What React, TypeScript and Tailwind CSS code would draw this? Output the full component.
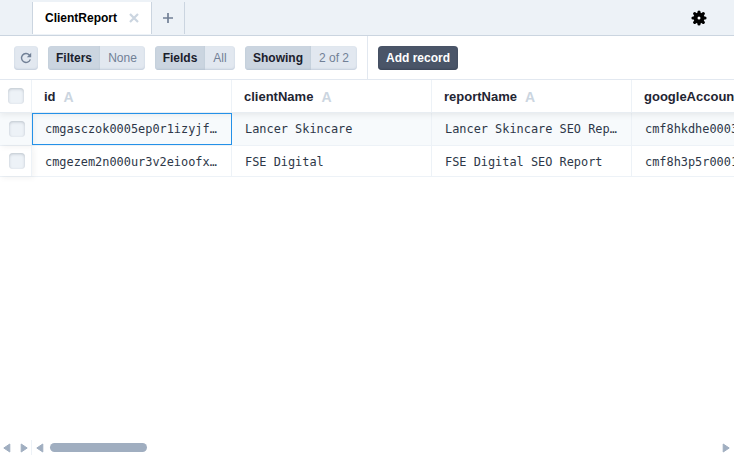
import React from "react";

const sans = "font-['Liberation_Sans',Arial,sans-serif]";

function Pill({ label, value, labelW, valueW }: { label: string; value: string; labelW: string; valueW: string }) {
  return (
    <button className="mr-[10px] flex h-6 shrink-0 overflow-hidden rounded bg-[#e2e8f0] text-[12px] leading-6 shadow-[inset_0_-1px_2px_#c3cddb]">
      <span className={`${labelW} bg-[#cbd5e0] text-center font-bold text-[#1a202c] shadow-[inset_0_-1px_2px_#b8c4d2]`}>{label}</span>
      <span className={`${valueW} text-center text-[#718096]`}>{value}</span>
    </button>
  );
}

function Check() {
  return <span className="block size-4 shrink-0 rounded bg-[#edf2f7] shadow-[inset_0_1px_3px_#bcc4cc]" />;
}

function Heading({ name, cell }: { name: string; cell: string }) {
  return (
    <div className={`flex h-full shrink-0 items-center border-r border-[#edf2f7] pt-px pl-3 text-[13px] font-bold text-[#1f2533] ${cell}`}>
      <span>{name}</span>
      <span className="ml-2 text-[14px] leading-4 text-[#cbd5e0]">A</span>
    </div>
  );
}

const rows = [
  ["cmgasczok0005ep0r1izyjf…", "Lancer Skincare", "Lancer Skincare SEO Rep…", "cmf8hkdhe0003"],
  ["cmgezem2n000ur3v2eioofx…", "FSE Digital", "FSE Digital SEO Report", "cmf8h3p5r0001"],
];

function Triangle({ right = false }: { right?: boolean }) {
  return (
    <svg width="8" height="10" viewBox="0 0 8 10" className="shrink-0" fill="#a0aec0" stroke="#a0aec0" strokeWidth="1" strokeLinejoin="round">
      {right ? <path d="M1.2 1 7.2 5 1.2 9Z" /> : <path d="M6.8 1 .8 5 6.8 9Z" />}
    </svg>
  );
}

export default function App() {
  return (
    <div className={`flex h-[455px] w-[734px] flex-col overflow-hidden bg-white ${sans}`}>
      <header className="flex h-9 shrink-0 items-start border-b border-[#cbd5e0] bg-[#edf2f7] pt-[2px]">
        <div className="ml-8 flex h-8 w-[120px] items-center border-x border-[#cbd5e0] bg-white pl-3 text-[12px] font-bold text-black">
          <span>ClientReport</span>
          <svg className="ml-[12px]" width="10" height="10" viewBox="0 0 10 10" fill="none" stroke="#cbd5e0" strokeWidth="2.2">
            <path d="m1 1 8 8m0-8L1 9" />
          </svg>
        </div>
        <button className="flex h-8 w-[33px] items-center justify-center border-r border-[#cbd5e0]">
          <svg width="10" height="10" viewBox="0 0 10 10" fill="none" stroke="#718096" strokeWidth="1.7">
            <path d="M5 0v10M0 5h10" />
          </svg>
        </button>
        <svg className="mr-[27px] ml-auto mt-2" width="16" height="16" viewBox="0 0 16 16">
          <circle cx="8" cy="8" r="5.5" />
          <path d="M8 2v12M2 8h12M3.7 3.7l8.6 8.6M12.3 3.7l-8.6 8.6" stroke="#000" strokeWidth="3.2" strokeLinecap="round" />
          <circle cx="8" cy="8" r="1.5" fill="#fff" />
        </svg>
      </header>

      <div className="flex h-11 shrink-0 items-center border-b border-[#e2e8f0] pl-[14px]">
        <button className="mr-[10px] flex size-6 shrink-0 items-center justify-center rounded bg-[#e2e8f0] shadow-[inset_0_-1px_2px_#c3cddb]">
          <svg width="12" height="12" viewBox="0 0 12 12" fill="none" stroke="#718096" strokeWidth="1.4">
            <path d="M10.3 7.4A4.5 4.5 0 1 1 9.3 2.9L10.3 4" />
            <path fill="#718096" stroke="none" d="M11.2.8v4.4H6.8Z" />
          </svg>
        </button>
        <Pill label="Filters" value="None" labelW="w-[52px]" valueW="w-[45px]" />
        <Pill label="Fields" value="All" labelW="w-[50px]" valueW="w-[30px]" />
        <Pill label="Showing" value="2 of 2" labelW="w-[66px]" valueW="w-[46px]" />
        <div className="mr-[10px] h-full w-px bg-[#e2e8f0]" />
        <button className="h-6 w-20 rounded bg-[#4a5568] text-[12px] font-bold leading-6 text-white shadow-[inset_0_-1px_2px_#3c4658]">Add record</button>
      </div>

      <main className="min-h-0 flex-1 overflow-hidden">
        <div className="relative z-10 flex h-[33px] w-[832px] border-b border-[#e8edf2] bg-white shadow-[0_2px_6px_#00000012]">
          <div className="flex h-full w-8 shrink-0 items-center border-r border-[#edf2f7] pl-2">
            <Check />
          </div>
          <Heading name="id" cell="w-[200px]" />
          <Heading name="clientName" cell="w-[200px]" />
          <Heading name="reportName" cell="w-[200px]" />
          <Heading name="googleAccountId" cell="w-[200px]" />
        </div>
        {rows.map((row, i) => (
          <div key={row[0]} className={`flex w-[832px] border-b border-[#edf2f7] ${i === 0 ? "h-[33px] bg-[#f7fafc]" : "h-[31px] bg-white"}`}>
            <div className="flex h-full w-8 shrink-0 items-center border-r border-[#edf2f7] pl-[9px] shadow-[2px_2px_6px_#0000000d]">
              <Check />
            </div>
            {row.map((value, j) => (
              <div
                key={j}
                className={`flex h-full w-[200px] shrink-0 items-center whitespace-pre pl-[13px] font-['DejaVu_Sans_Mono',monospace] text-[11.9px] text-[#2d3748] ${
                  i === 0 ? "pt-[2px]" : "pt-[3px]"
                } ${i === 0 && j === 0 ? "relative z-20 border border-[#2491e8] pl-[12px]!" : "border-r border-[#edf2f7]"}`}
              >
                {value}
              </div>
            ))}
          </div>
        ))}
      </main>

      <footer className="flex h-[15px] shrink-0 items-center">
        <div className="flex h-full w-8 items-center justify-between border-r border-[#edf2f7] pr-[3px] pl-[3px]">
          <Triangle />
          <Triangle right />
        </div>
        <div className="flex flex-1 items-center pl-1">
          <Triangle />
          <div className="ml-[6px] h-[9px] w-[97px] rounded-full bg-[#a0aec0]" />
          <div className="mr-[4px] ml-auto">
            <Triangle right />
          </div>
        </div>
      </footer>
    </div>
  );
}
